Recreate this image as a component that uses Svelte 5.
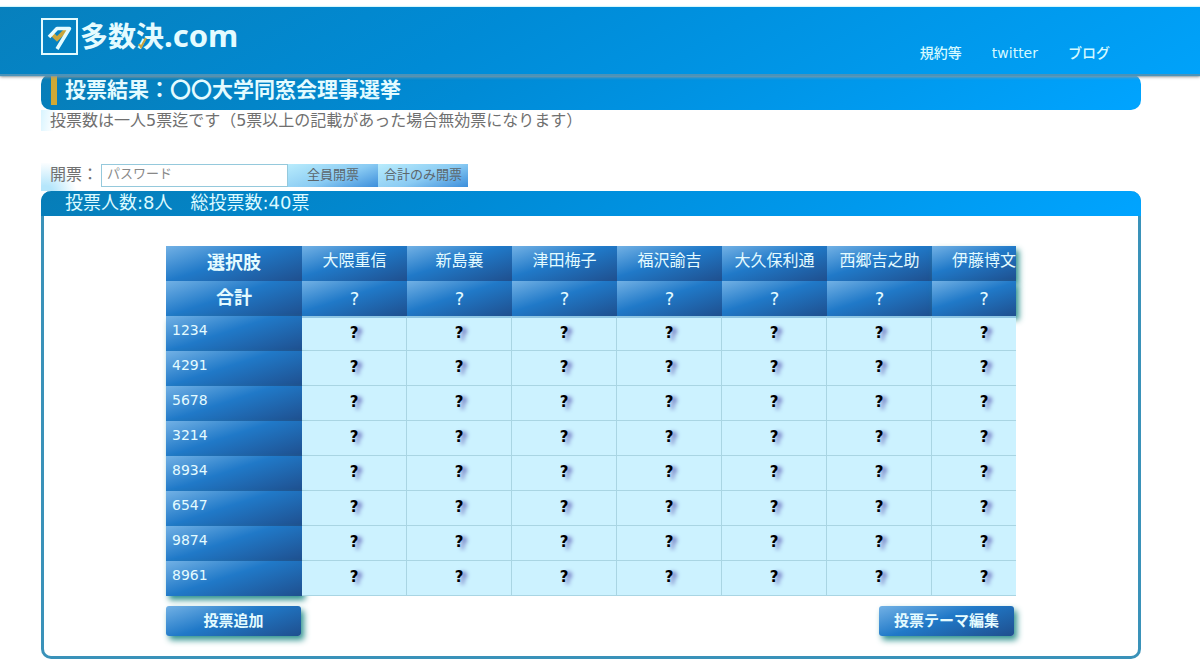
<script lang="ts">
  interface Voter {
    id: string;
    votes: string[];
  }

  const links = ['規約等', 'twitter', 'ブログ'];
  const candidates = ['大隈重信', '新島襄', '津田梅子', '福沢諭吉', '大久保利通', '西郷吉之助', '伊藤博文'];
  const ids = ['1234', '4291', '5678', '3214', '8934', '6547', '9874', '8961'];

  const voters: Voter[] = ids.map((id) => ({ id, votes: candidates.map(() => '?') }));
  const totals = candidates.map(() => '?');
  const totalVotes = voters.length * 5;

  let password = $state('');
</script>

<header class="header">
  <a class="logo" href="#top" aria-label="多数決.com">
    <svg class="logo__mark" viewBox="0 0 37 37" aria-hidden="true">
      <rect x="1" y="1" width="35" height="35" fill="none" stroke="#e4fbff" stroke-width="2" />
      <path d="M11 16l5 5 9-9" fill="none" stroke="#c9a53c" stroke-width="4" />
      <path d="M8 19l8-8.500h12.500L16 31" fill="none" stroke="#e4fbff" stroke-width="3.500" stroke-linejoin="round" />
    </svg>
    <span class="logo__text">多数決<span class="logo__tld">.com</span>
      <svg class="logo__check" viewBox="0 0 10 12" aria-hidden="true">
        <path d="M1 7l2 3 5-9" fill="none" stroke="#c9a53c" stroke-width="2" />
      </svg>
    </span>
  </a>
  <nav class="nav">
    {#each links as link (link)}
      <a href="#{link}">{link}</a>
    {/each}
  </nav>
</header>

<main class="page">
  <div class="title">
    <h1>投票結果：〇〇大学同窓会理事選挙</h1>
  </div>
  <p class="lead">投票数は一人5票迄です（5票以上の記載があった場合無効票になります）</p>

  <form class="open" onsubmit={(e) => e.preventDefault()}>
    <label for="password">開票：</label>
    <input id="password" type="password" placeholder="パスワード" bind:value={password} />
    <button type="submit">全員開票</button>
    <button type="button">合計のみ開票</button>
  </form>

  <section class="panel">
    <h2 class="panel__head">投票人数:{voters.length}人　総投票数:{totalVotes}票</h2>
    <div class="panel__body">
      <table class="votes">
        <colgroup>
          <col class="votes__idcol" />
          {#each candidates as name, i (name)}
            <col class:votes__lastcol={i === candidates.length - 1} />
          {/each}
        </colgroup>
        <thead>
          <tr>
            <th class="votes__label" scope="col">選択肢</th>
            {#each candidates as name (name)}
              <th class="votes__name" scope="col">{name}</th>
            {/each}
          </tr>
          <tr>
            <th class="votes__label" scope="row">合計</th>
            {#each totals as total, i (i)}
              <td class="votes__total">{total}</td>
            {/each}
          </tr>
        </thead>
        <tbody>
          {#each voters as voter (voter.id)}
            <tr>
              <th class="votes__id" scope="row">{voter.id}</th>
              {#each voter.votes as vote, i (i)}
                <td class="votes__cell">{vote}</td>
              {/each}
            </tr>
          {/each}
        </tbody>
      </table>
      <div class="actions">
        <button type="button">投票追加</button>
        <button type="button">投票テーマ編集</button>
      </div>
    </div>
  </section>
</main>

<style>
  :global(body) {
    background: #fff;
    color: #707070;
    font-family: 'DejaVu Sans', 'Noto Sans CJK JP', sans-serif;
    font-size: 16px;
  }
  h1,
  h2,
  p {
    margin: 0;
  }
  button,
  input {
    box-sizing: border-box;
    font-family: inherit;
  }

  .header {
    position: relative;
    z-index: 1;
    display: flex;
    justify-content: space-between;
    align-items: flex-start;
    box-sizing: border-box;
    height: 67px;
    margin-top: 7px;
    padding: 10px 90px 0 41px;
    background: linear-gradient(150deg, #0780bd, #008bd6 40%, #00a2fa);
    box-shadow:
      0 -1px 1px #d5f6fc,
      0 2px 1px #4b93b9,
      0 3px 3px #999;
  }
  .logo {
    display: flex;
    align-items: center;
    gap: 2px;
    color: #e4fbff;
    text-decoration: none;
  }
  .logo__mark {
    width: 37px;
    height: 37px;
  }
  .logo__text {
    position: relative;
    font-size: 28px;
    font-weight: 700;
    line-height: 37px;
    white-space: nowrap;
  }
  .logo__tld {
    font-family: 'Noto Sans', sans-serif;
    font-size: 31px;
  }
  .logo__check {
    position: absolute;
    left: 58px;
    top: 20px;
    width: 10px;
    height: 12px;
  }
  .nav {
    display: flex;
    gap: 30px;
    padding-top: 26px;
  }
  .nav a {
    color: #d5f9ff;
    font-size: 14px;
    font-weight: 500;
    line-height: 20px;
    text-decoration: none;
  }

  .page {
    margin: 0 59px 0 41px;
  }
  .title {
    padding: 1px 10px 5px;
    border-radius: 10px;
    background: linear-gradient(150deg, #077db7, #008bd6 40%, #00a4ff);
  }
  h1 {
    padding-left: 8px;
    border-left: 6px solid #cfa935;
    color: #e4fbff;
    font-size: 21px;
    line-height: 30px;
  }
  .lead {
    padding-left: 9px;
    background: linear-gradient(100deg, #d8f4ff, #fff 16px);
    line-height: 21px;
  }

  .open {
    display: flex;
    align-items: center;
    margin-top: 32px;
    padding: 0 0 4px 9px;
    background: radial-gradient(circle at 4px 110%, #b5e6fb 8px, #fff 32px);
  }
  .open label {
    width: 51px;
    line-height: 24px;
    white-space: nowrap;
  }
  .open input {
    width: 187px;
    height: 23px;
    padding: 0 5px 3px;
    border: 1px solid #95c9dc;
    background: #fff;
    font-size: 13px;
  }
  .open input::placeholder {
    color: #888;
  }
  .open button {
    width: 90px;
    height: 23px;
    padding: 0 0 4px;
    border: 0;
    background: linear-gradient(160deg, #b9ecfc, #8acbf3 55%, #3c8edb);
    color: #5c666c;
    font-size: 13px;
    white-space: nowrap;
  }

  .panel {
    border: 3px solid #3a92b9;
    border-top: 0;
    border-radius: 10px;
  }
  .panel__head {
    margin: 0 -3px;
    padding: 0 24px 2px;
    border-radius: 10px 10px 0 0;
    background: linear-gradient(150deg, #077db7, #008bd6 40%, #00a4ff);
    color: #dcfaff;
    font-size: 18px;
    font-weight: 400;
    line-height: 23px;
  }
  .panel__body {
    max-width: 850px;
    margin: 0 auto;
    padding: 30px 0 20px;
  }

  .votes {
    width: 100%;
    table-layout: fixed;
    border-spacing: 0;
    text-align: center;
  }
  .votes__idcol {
    width: 136px;
  }
  .votes__lastcol {
    width: 84px;
  }
  .votes th,
  .votes td {
    box-sizing: border-box;
    height: 35px;
    padding: 0;
    line-height: 24px;
  }
  .votes thead th,
  .votes thead td,
  .votes__id {
    background: linear-gradient(162deg, #72b1e5, #2079c8 45%, #1f4f8e);
    color: #e4fbff;
  }
  .votes tr > :last-child {
    padding-left: 20px;
  }
  .votes thead tr > :last-child,
  .votes__id {
    box-shadow: 3px 4px 6px #30938f;
  }
  .votes th.votes__label {
    padding-bottom: 2px;
    font-size: 18px;
  }
  .votes th.votes__name {
    padding-bottom: 5px;
    font-weight: 400;
    white-space: nowrap;
  }
  .votes__total {
    font-size: 18px;
  }
  .votes th.votes__id {
    padding: 0 6px 8px;
    font-size: 14px;
    font-weight: 400;
    text-align: left;
  }
  .votes td.votes__cell {
    padding-bottom: 2px;
    border-right: 1px solid #a9d5e3;
    border-bottom: 1px solid #a9d5e3;
    background: #ccf2ff;
    color: #000;
    font-size: 15px;
    font-weight: 700;
    text-shadow: 4px 2px 4px #5555b0;
  }
  .votes td.votes__cell:last-child {
    border-right: 0;
  }
  .votes tbody tr:first-child .votes__cell {
    border-top: 2px solid #8fc6e3;
  }

  .actions {
    display: flex;
    justify-content: space-between;
    margin-top: 10px;
    padding-right: 2px;
  }
  .actions button {
    width: 135px;
    height: 30px;
    padding: 0 0 4px;
    border: 0;
    border-radius: 3px;
    background: linear-gradient(162deg, #72b1e5, #2079c8 45%, #1f4f8e);
    box-shadow: 3px 4px 6px #30938f;
    color: #e4fbff;
    font-size: 15px;
    font-weight: 700;
  }
</style>
